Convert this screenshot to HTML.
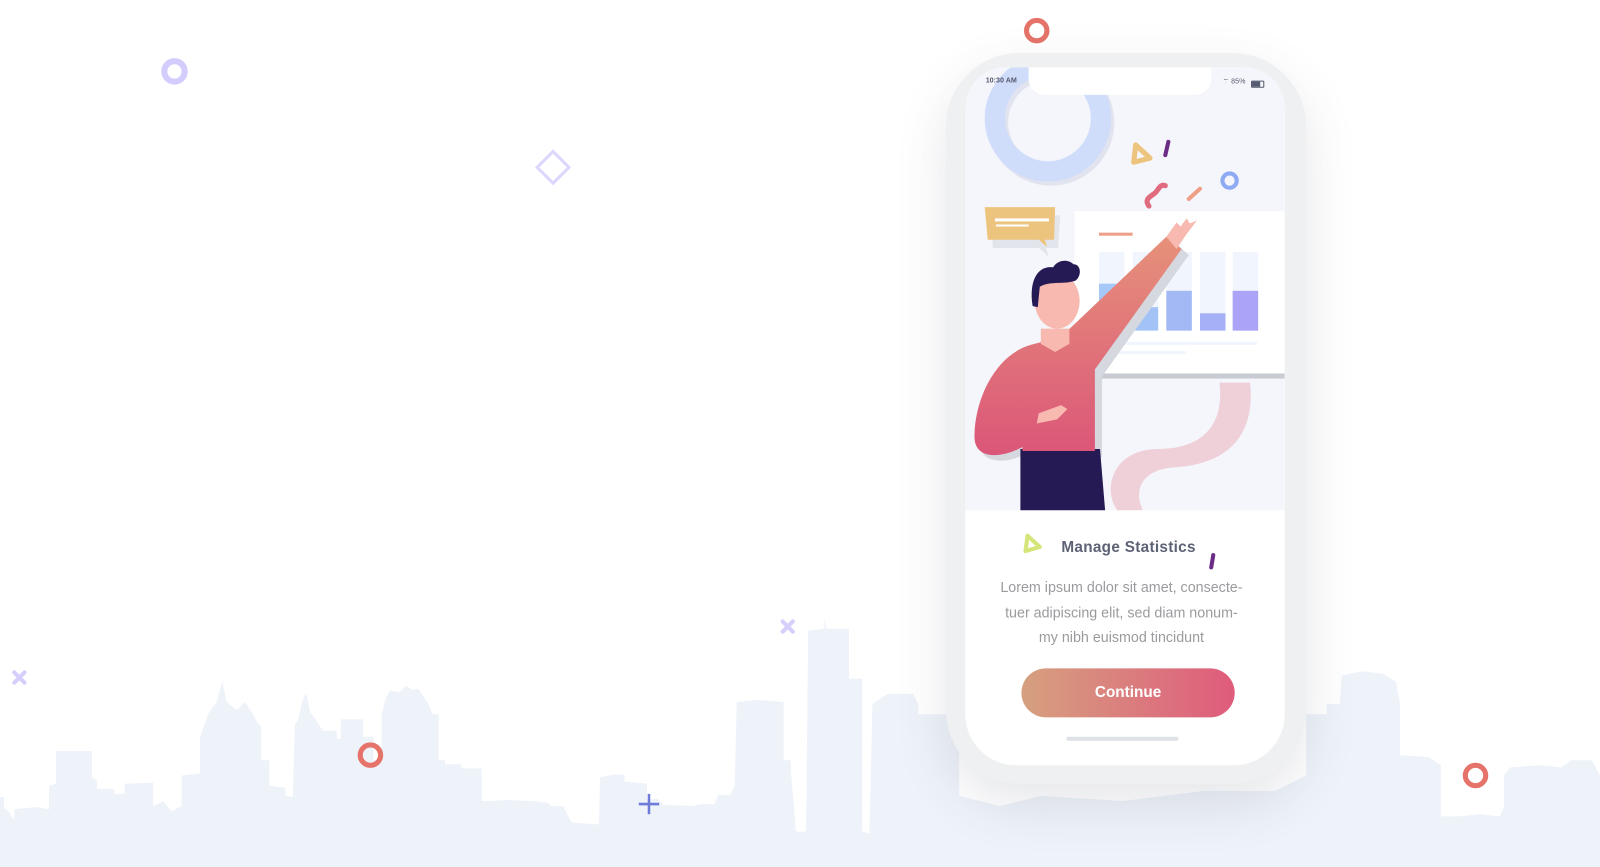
<!DOCTYPE html>
<html><head><meta charset="utf-8">
<style>
html,body{margin:0;padding:0;}
body{width:1600px;height:850px;position:relative;overflow:hidden;background:#fff;font-family:"Liberation Sans",sans-serif;}
#wrap{position:absolute;left:0;top:0;width:1568px;height:833px;transform:scale(1.020408);transform-origin:0 0;}
svg{position:absolute;left:0;top:0;}
.phone{position:absolute;left:927px;top:52px;width:353px;height:716px;border-radius:72px;background:#eef0f1;box-shadow:0 20px 50px rgba(60,70,90,.13);}
.screen{position:absolute;left:946px;top:66px;width:313px;height:684px;border-radius:40px 40px 50px 50px;background:#fff;overflow:hidden;}
.t{position:absolute;text-align:center;}
</style></head><body>
<div id="wrap">
<svg width="1600" height="850" viewBox="0 0 1600 850">
<polygon fill="#eef2f9" points="0,850 0,781 4,781 4,792 8,795 14,804 14,793 35,791 48,793 48,770 55,768 55,736 90,736 90,762 95,765 95,773 112,773 112,778 122,778 122,768 150,767 150,790 160,785 168,795 178,790 178,760 196,758 196,722 204,700 212,688 218,668 222,688 232,696 240,688 248,700 252,708 256,712 256,745 264,745 264,770 280,772 280,780 287,781 289,710 292,706 296,688 300,679 304,698 310,706 316,716 330,716 330,724 334,724 334,705 356,705 356,722 366,722 366,745 374,745 374,700 378,684 382,677 392,678 398,672 404,676 410,675 420,690 424,700 430,700 430,745 436,745 436,749 452,749 452,753 472,753 472,785 480,785 496,784 522,785 537,787 540,790 552,790 560,806 587,808 588,762 602,759 612,759 612,766 634,768 634,783 645,783 650,789 660,789 680,790 686,788 700,788 704,779 716,779 720,770 722,688 742,686 768,688 768,745 775,745 775,755 780,815 790,815 792,618 808,616 808,605 810,616 832,616 832,665 845,665 845,815 852,817 855,690 870,680 895,680 900,690 900,850"/>
<polygon fill="#eef2f9" points="1280,850 1280,700 1300,700 1300,690 1313,690 1315,662 1335,658 1355,660 1368,668 1372,690 1372,740 1400,742 1412,750 1412,800 1430,800 1450,798 1470,800 1474,790 1474,760 1480,752 1510,750 1530,752 1540,745 1560,745 1568,760 1600,760 1600,850"/>
<polygon fill="#eef2f9" points="900,850 900,700 940,700 940,780 980,790 1020,780 1100,785 1140,780 1180,775 1250,775 1280,760 1280,850"/>
<circle cx="171" cy="70" r="10" fill="none" stroke="#d3cdfd" stroke-width="6"/>
<rect x="531" y="153" width="22" height="22" transform="rotate(45 542 164)" fill="none" stroke="#ddd6fd" stroke-width="3"/>
<circle cx="1016" cy="30" r="10" fill="none" stroke="#e5736a" stroke-width="5"/>
<circle cx="363" cy="740" r="10" fill="none" stroke="#e5736a" stroke-width="5"/>
<circle cx="1446" cy="760" r="10" fill="none" stroke="#e5736a" stroke-width="5"/>
<g stroke="#d6cffb" stroke-width="4" stroke-linecap="round"><path d="M14 659l10 10M24 659l-10 10"/><path d="M767 609l10 10M777 609l-10 10"/></g>
<path d="M636 778v20M626 788h20" stroke="#6f7bd8" stroke-width="2.5"/>
</svg>
<div class="phone"></div>
<div class="screen">
<svg width="313" height="684" viewBox="946 66 313 684">
<rect x="946" y="66" width="313" height="434" fill="#f5f6fb"/>
<circle cx="1030" cy="120" r="52" fill="none" stroke="#e1e4ee" stroke-width="20"/>
<circle cx="1027" cy="116" r="52" fill="none" stroke="#cfdcfa" stroke-width="20"/>
<path d="M1135 440 C1090 440 1080 480 1095 500 L1120 500 C1110 480 1120 460 1150 458 C1210 455 1230 420 1225 375 L1195 375 C1200 415 1180 440 1135 440Z" fill="#efd0d9"/>
<rect x="1053" y="207" width="210" height="164" fill="#fff"/>
<rect x="1070" y="366" width="193" height="5" fill="#c9cbd3"/>
<rect x="1077" y="228" width="33" height="3" fill="#ef9e88"/>
<g fill="#f1f5fd"><rect x="1077" y="247" width="25" height="77"/><rect x="1110" y="247" width="25" height="77"/><rect x="1143" y="247" width="25" height="77"/><rect x="1176" y="247" width="25" height="77"/><rect x="1208" y="247" width="25" height="77"/></g>
<rect x="1077" y="278" width="25" height="46" fill="#a6c8f8"/><rect x="1110" y="301" width="25" height="23" fill="#a3c3f6"/><rect x="1143" y="285" width="25" height="39" fill="#a3b9f6"/><rect x="1176" y="307" width="25" height="17" fill="#a6b0f6"/><rect x="1208" y="285" width="25" height="39" fill="#aba3f6"/>
<rect x="1077" y="335" width="155" height="3" fill="#f1f5fd"/><rect x="1077" y="344" width="85" height="3" fill="#f1f5fd"/>
<path d="M967 206h68l-2 32h-12l3 9-10-9h-45z" fill="#e3e5ec" transform="translate(4 5)"/>
<path d="M965 203h69l-1 32h-9l2 7-8-7h-50z" fill="#edc47e"/>
<rect x="975" y="214" width="53" height="3" fill="#fff"/><rect x="976" y="220" width="32" height="2" fill="#fff"/>
<path d="M1113 142l14 13-16 4z" fill="none" stroke="#edc47e" stroke-width="5" stroke-linejoin="round"/>
<path d="M1145 139l-3 13" stroke="#6b2c85" stroke-width="4" stroke-linecap="round"/>
<circle cx="1205" cy="177" r="7" fill="none" stroke="#8eaaf2" stroke-width="4"/>
<path d="M1126 202c-6-8 4-10 7-14s5-8 9-6" fill="none" stroke="#e06b7e" stroke-width="5" stroke-linecap="round"/>
<path d="M1165 195l11-10" stroke="#ef9e88" stroke-width="4" stroke-linecap="round"/>
<defs><linearGradient id="sh" x1="0" y1="0" x2="0" y2="1"><stop offset="0" stop-color="#e6917a"/><stop offset="1" stop-color="#db5679"/></linearGradient></defs>
<path d="M1040 330 L1145 232 L1160 246 L1075 365 L1075 444 L1002 444 L1002 440 C980 452 955 450 955 430 C955 395 975 350 1010 340Z" fill="#d6d8df" transform="translate(5 4)"/>
<path d="M1000 440h78l5 60h-83z" fill="#251a54"/>
<path d="M1040 330 L1143 232 L1158 244 L1073 362 L1073 442 L1002 442 L1002 438 C980 450 955 450 955 428 C955 392 975 348 1010 338Z" fill="url(#sh)"/>
<path d="M1143 232l10-14 4 4 6-8 3 5 7-3-12 16-8 12z" fill="#f8b9b0"/>
<path d="M1018 405l22-8 6 4-10 10-20 4z" fill="#f8b9b0"/>
<path d="M1020 322h28v15l-14 8-14-8z" fill="#f8b9b0"/>
<ellipse cx="1036" cy="295" rx="22" ry="27" fill="#f8b9b0"/>
<path d="M1012 300c-4-25 5-40 20-38 5-8 15-8 20-3 8 0 8 12 2 16-10 4-25 0-35 6l-2 20z" fill="#251a54"/>
</svg>
<div class="t" style="left:20px;top:10px;font-size:7px;color:#555a70;font-weight:bold;">10:30 AM</div>
<div class="t" style="left:252px;top:10px;font-size:7px;color:#555a70;">⌔ 85%</div>
<div style="position:absolute;left:280px;top:13px;width:11px;height:5px;border:1px solid #555a70;border-radius:1px;"><div style="width:8px;height:5px;background:#555a70"></div></div>
<div style="position:absolute;left:62px;top:0;width:179px;height:27px;background:#fff;border-radius:0 0 16px 16px;"></div>
<div class="t" style="left:0;width:320px;top:462px;font-size:15px;font-weight:bold;color:#5d6275;letter-spacing:.3px;">Manage Statistics</div>
<svg width="313" height="684" viewBox="946 66 313 684" style="pointer-events:none">
<path d="M1007 525l12 11-14 4z" fill="none" stroke="#d6e57a" stroke-width="4" stroke-linejoin="round"/>
<path d="M1189 544l-2 12" stroke="#6b2c85" stroke-width="4" stroke-linecap="round"/>
</svg>
<div class="t" style="left:0;width:306px;top:497px;font-size:14px;line-height:24.5px;color:#9b9b9f;">Lorem ipsum dolor sit amet, consecte-<br>tuer adipiscing elit, sed diam nonum-<br>my nibh euismod tincidunt</div>
<div style="position:absolute;left:55px;top:589px;width:209px;height:48px;border-radius:24px;background:linear-gradient(90deg,#d6a07f,#df5b7c);color:#fff;font-weight:bold;font-size:15px;text-align:center;line-height:48px;">Continue</div>
<div style="position:absolute;left:99px;top:656px;width:110px;height:4px;border-radius:2px;background:#dfe3e8;"></div>
</div>
</div>
</body></html>
